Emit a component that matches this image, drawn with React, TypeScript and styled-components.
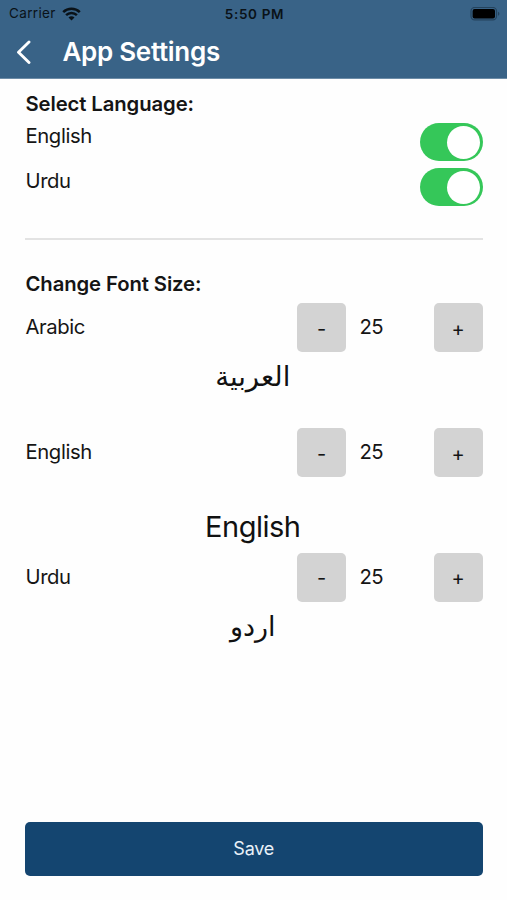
import React, { useState } from "react";
import styled, { createGlobalStyle } from "styled-components";

const GlobalStyle = createGlobalStyle`
  * { box-sizing: border-box; }
  body {
    margin: 0;
    background: #fefefe;
    color: #151515;
    font-family: Inter, "DejaVu Sans", sans-serif;
  }
  button { font-family: inherit; border: 0; padding: 0; cursor: pointer; }
`;

const Screen = styled.div`
  display: flex;
  flex-direction: column;
  width: 100%;
  max-width: 507px;
  height: 900px;
  overflow: hidden;
`;

const Header = styled.header`
  height: 79px;
  flex: none;
  background: #396387;
  border-bottom: 1px solid #6d8ca7;
`;

const StatusBar = styled.div`
  display: grid;
  grid-template-columns: 1fr auto 1fr;
  align-items: center;
  height: 27px;
  padding: 0 7px 0 9px;
  color: #0a1218;
`;

const Carrier = styled.div`
  display: flex;
  align-items: center;
  gap: 6px;
  font-size: 13.5px;
  line-height: 27px;
  letter-spacing: 0.35px;
`;

const Clock = styled.div`
  font-size: 13.5px;
  font-weight: 600;
  letter-spacing: 0.65px;
`;

const Battery = styled.svg`
  justify-self: end;
`;

const NavBar = styled.div`
  display: flex;
  align-items: center;
  height: 50px;
  padding-left: 16px;
`;

const BackButton = styled.button`
  display: flex;
  width: 46.5px;
  background: transparent;
`;

const NavTitle = styled.h1`
  margin: 0;
  color: #fff;
  font-size: 26px;
  font-weight: 600;
  line-height: 50px;
  letter-spacing: -0.3px;
`;

const Content = styled.main`
  display: flex;
  flex: 1;
  flex-direction: column;
  padding: 12px 24.5px 24.5px 25px;
`;

const SectionTitle = styled.h2`
  margin: 0 0 6px;
  padding-left: 0.5px;
  font-size: 20.3px;
  font-weight: 600;
  line-height: 26px;
  letter-spacing: -0.1px;
`;

const LanguageRow = styled.div`
  display: flex;
  justify-content: space-between;
  height: 45px;
`;

const Label = styled.span`
  padding-left: 0.5px;
  font-size: 20.3px;
  line-height: 26px;
  letter-spacing: -0.4px;
`;

const Toggle = styled.button<{ $on: boolean }>`
  display: flex;
  justify-content: ${(p) => (p.$on ? "flex-end" : "flex-start")};
  width: 62.5px;
  height: 38px;
  margin-top: 0.3px;
  padding: 2.5px;
  border-radius: 19px;
  background: ${(p) => (p.$on ? "#35c759" : "#e9e9eb")};
`;

const Knob = styled.span`
  width: 33px;
  height: 33px;
  border-radius: 50%;
  background: #fff;
`;

const Divider = styled.hr`
  width: 100%;
  height: 2px;
  margin: 25px 0 31px;
  border: 0;
  background: #e3e3e3;
`;

const SizeGroup = styled.section`
  height: 124.7px;
`;

const SizeRow = styled.div`
  display: grid;
  grid-template-columns: 1fr 49px 87.5px 49px;
  padding-top: 0.4px;
`;

const RowLabel = styled(Label)`
  padding-top: 11px;
`;

const Value = styled(RowLabel)`
  padding-left: 13.5px;
  letter-spacing: -0.6px;
`;

const StepButton = styled.button`
  height: 49px;
  padding-top: 2px;
  border-radius: 5px;
  background: #d3d3d3;
  color: #151515;
  font-size: 20px;
`;

const Sample = styled.div<{ $top: number; $size: number; $spacing: number }>`
  margin-top: ${(p) => p.$top}px;
  padding-right: 2px;
  color: #111;
  font-size: ${(p) => p.$size}px;
  line-height: 40px;
  letter-spacing: ${(p) => p.$spacing}px;
  text-align: center;
`;

const SaveButton = styled.button`
  height: 54px;
  margin-top: auto;
  border-radius: 5px;
  background: #144570;
  color: #e9f1f8;
  font-size: 18px;
  letter-spacing: -0.2px;
`;

const samples = [
  { name: "Arabic", text: "العربية", dir: "rtl", top: 4, size: 27.5, spacing: 0 },
  { name: "English", text: "English", dir: "ltr", top: 30, size: 29, spacing: -0.5 },
  { name: "Urdu", text: "اردو", dir: "rtl", top: 5, size: 27, spacing: 0 },
];

export default function App() {
  const [enabled, setEnabled] = useState<Record<string, boolean>>({ English: true, Urdu: true });
  const [sizes, setSizes] = useState<Record<string, number>>({ Arabic: 25, English: 25, Urdu: 25 });
  const step = (name: string, by: number) => setSizes((s) => ({ ...s, [name]: s[name] + by }));

  return (
    <Screen>
      <GlobalStyle />
      <Header>
        <StatusBar>
          <Carrier>
            Carrier
            <svg width="19" height="14" viewBox="0 0 19 14" fill="none" stroke="currentColor" strokeWidth="2.5">
              <path d="M1.2 5.1A11.8 11.8 0 0 1 17.8 5.1" />
              <path d="M4.1 8.1A7.7 7.7 0 0 1 14.9 8.1" />
              <path d="M9.5 13.5L6.5 10.5A4.2 4.2 0 0 1 12.5 10.5Z" fill="currentColor" stroke="none" />
            </svg>
          </Carrier>
          <Clock>5:50 PM</Clock>
          <Battery width="30" height="14" viewBox="0 0 30 14">
            <rect x="1" y="0.5" width="25.5" height="12.4" rx="3.6" fill="none" stroke="#24435d" strokeWidth="1.2" />
            <rect x="2.6" y="2" width="22.4" height="9.4" rx="2" fill="#000" />
            <path d="M28 4.7v4c1.9-.8 1.9-3.2 0-4Z" fill="#24435d" />
          </Battery>
        </StatusBar>
        <NavBar>
          <BackButton aria-label="Back">
            <svg width="16" height="24" viewBox="0 0 16 24" fill="none" stroke="#fff" strokeWidth="2.9">
              <path d="M13 2L2.5 12.2L13 22.5" strokeLinecap="round" strokeLinejoin="round" />
            </svg>
          </BackButton>
          <NavTitle>App Settings</NavTitle>
        </NavBar>
      </Header>
      <Content>
        <SectionTitle>Select Language:</SectionTitle>
        {["English", "Urdu"].map((name) => (
          <LanguageRow key={name}>
            <Label>{name}</Label>
            <Toggle
              role="switch"
              aria-label={name}
              aria-checked={enabled[name]}
              $on={enabled[name]}
              onClick={() => setEnabled((e) => ({ ...e, [name]: !e[name] }))}
            >
              <Knob />
            </Toggle>
          </LanguageRow>
        ))}
        <Divider />
        <SectionTitle>Change Font Size:</SectionTitle>
        {samples.map((s) => (
          <SizeGroup key={s.name}>
            <SizeRow>
              <RowLabel>{s.name}</RowLabel>
              <StepButton onClick={() => step(s.name, -1)}>-</StepButton>
              <Value>{sizes[s.name]}</Value>
              <StepButton onClick={() => step(s.name, 1)}>+</StepButton>
            </SizeRow>
            <Sample dir={s.dir} $top={s.top} $size={s.size} $spacing={s.spacing}>
              {s.text}
            </Sample>
          </SizeGroup>
        ))}
        <SaveButton>Save</SaveButton>
      </Content>
    </Screen>
  );
}
